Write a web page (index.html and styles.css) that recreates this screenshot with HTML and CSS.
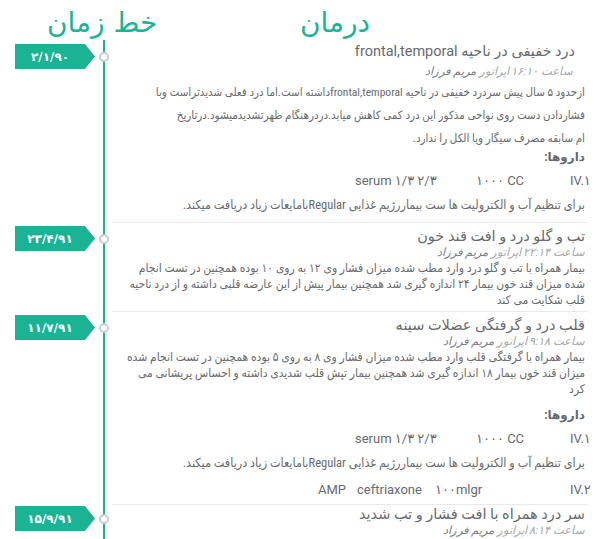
FILE: index.html
```html
<!DOCTYPE html>
<html lang="fa">
<head>
<meta charset="utf-8">
<title>خط زمان درمان</title>
<link rel="stylesheet" href="styles.css">
</head>
<body>
<div class="page">
  <header class="head">
    <div class="head-time">خط زمان</div>
    <div class="head-main">درمان</div>
  </header>

  <div class="timeline">
    <article class="entry entry-first">
      <div class="when"><span class="tag">۲/۱/۹۰</span></div>
      <div class="axis"><span class="dot"></span></div>
      <div class="body" dir="rtl">
        <h2 class="title title-inset">درد خفیفی در ناحیه frontal,temporal</h2>
        <div class="meta meta-inset">ساعت ۱۶:۱۰ اپراتور <span class="who">مریم فرزاد</span></div>
        <p class="desc desc-loose">ازحدود ۵ سال پیش سردرد خفیفی در ناحیه frontal,temporalداشته است.اما درد فعلی شدیدتراست وبا فشاردادن دست روی نواحی مذکور این درد کمی کاهش میابد.دردرهنگام ظهرتشدیدمیشود.درتاریخ<br>ام سابقه مصرف سیگار ویا الکل را ندارد.</p>
        <div class="drugs-h drugs-h-tight">داروها:</div>
        <div class="drug drug-a" dir="ltr"><span class="c3">serum ۱/۳ ۲/۳</span><span class="c2">۱۰۰۰ CC</span><span class="c1">IV.۱</span></div>
        <p class="note">برای تنظیم آب و الکترولیت ها ست بیماررژیم غذایی Regularبامایعات زیاد دریافت میکند.</p>
      </div>
    </article>

    <article class="entry">
      <div class="when"><span class="tag">۲۳/۴/۹۱</span></div>
      <div class="axis"><span class="dot"></span></div>
      <div class="body" dir="rtl">
        <h2 class="title">تب و گلو درد و افت قند خون</h2>
        <div class="meta">ساعت ۲۲:۱۴ اپراتور <span class="who">مریم فرزاد</span></div>
        <p class="desc">بیمار همراه با تب و گلو درد وارد مطب شده میزان فشار وی ۱۲ به روی ۱۰ بوده همچنین در تست انجام شده میزان قند خون بیمار ۲۴ اندازه گیری شد همچنین بیمار پیش از این عارضه قلبی داشته و از درد ناحیه قلب شکایت می کند</p>
      </div>
    </article>

    <article class="entry">
      <div class="when"><span class="tag">۱۱/۷/۹۱</span></div>
      <div class="axis"><span class="dot"></span></div>
      <div class="body" dir="rtl">
        <h2 class="title">قلب درد و گرفتگی عضلات سینه</h2>
        <div class="meta">ساعت ۹:۱۸ اپراتور <span class="who">مریم فرزاد</span></div>
        <p class="desc">بیمار همراه با گرفتگی قلب وارد مطب شده میزان فشار وی ۸ به روی ۵ بوده همچنین در تست انجام شده میزان قند خون بیمار ۱۸ اندازه گیری شد همچنین بیمار تپش قلب شدیدی داشته و احساس پریشانی می کرد</p>
        <div class="drugs-h">داروها:</div>
        <div class="drug drug-a" dir="ltr"><span class="c3">serum ۱/۳ ۲/۳</span><span class="c2">۱۰۰۰ CC</span><span class="c1">IV.۱</span></div>
        <p class="note">برای تنظیم آب و الکترولیت ها ست بیماررژیم غذایی Regularبامایعات زیاد دریافت میکند.</p>
        <div class="drug drug-b" dir="ltr"><span class="c4">AMP</span><span class="c3">ceftriaxone</span><span class="c2">۱۰۰mlgr</span><span class="c1">IV.۲</span></div>
      </div>
    </article>

    <article class="entry entry-last">
      <div class="when"><span class="tag">۱۵/۹/۹۱</span></div>
      <div class="axis"><span class="dot"></span></div>
      <div class="body" dir="rtl">
        <h2 class="title">سر درد همراه با افت فشار و تب شدید</h2>
        <div class="meta">ساعت ۸:۱۴ اپراتور <span class="who">مریم فرزاد</span></div>
      </div>
    </article>
  </div>
</div>
</body>
</html>
```

FILE: styles.css
```css
* { box-sizing: border-box; }

html, body {
  margin: 0;
  padding: 0;
  background: #ffffff;
}

body {
  font-family: Roboto, "DejaVu Sans", sans-serif;
  color: #676a6c;
  width: 600px;
  height: 539px;
  overflow: hidden;
}

.head {
  display: flex;
  align-items: flex-end;
  height: 40px;
  color: #1ab394;
  font-family: "DejaVu Sans", sans-serif;
  font-size: 28px;
  line-height: 34px;
}

.head-time {
  width: 300px;
  padding-left: 47px;
}

.timeline {
  background: linear-gradient(#1ab394, #1ab394) no-repeat 103px 0 / 2px 100%;
  min-height: 499px;
}

.entry {
  display: grid;
  grid-template-columns: 96px 16px 1fr;
  align-items: start;
}

.when {
  padding: 3px 0 0 15px;
}

.tag {
  display: flex;
  align-items: center;
  justify-content: center;
  width: 80px;
  height: 25px;
  padding-right: 10px;
  background: #1ab394;
  color: #ffffff;
  font-size: 12px;
  font-weight: bold;
  clip-path: polygon(0 0, 70px 0, 80px 50%, 70px 100%, 0 100%);
}

.axis {
  display: flex;
  justify-content: center;
  padding-top: 11px;
}

.dot {
  width: 10px;
  height: 10px;
  border: 2px solid #c9cccd;
  border-radius: 50%;
  background: #ffffff;
}

.body {
  margin-right: 12px;
  padding: 6px 3px 3px 12px;
  border-bottom: 1px solid #e7eaec;
  text-align: right;
}

.entry-first .body { padding-top: 2px; padding-bottom: 5px; }
.entry-first .when { padding-top: 4px; }
.entry-first .axis { padding-top: 12px; }

.entry-last .body { border-bottom: 0; padding-top: 2px; }
.entry-last .when { padding-top: 1px; }
.entry-last .axis { padding-top: 9px; }

.title {
  margin: 0;
  font-size: 14.5px;
  font-weight: normal;
  line-height: 16px;
  color: #676a6c;
}

.title-inset { padding-right: 10px; line-height: 20px; }

.meta {
  margin-top: 1px;
  font-size: 11.5px;
  font-style: italic;
  line-height: 12px;
  color: #a5a7a9;
}

.meta-inset { padding-right: 12px; margin-top: 3px; }

.meta .who {
  color: #7b7e80;
}

.desc {
  margin: 2px 0 0;
  font-family: Roboto, "DejaVu Sans Condensed", "DejaVu Sans", sans-serif;
  font-stretch: condensed;
  font-size: 12px;
  line-height: 16px;
}

.desc-loose {
  margin-top: 4px;
  font-size: 11.5px;
  line-height: 23px;
}

.drugs-h {
  margin-top: 8px;
  font-size: 12px;
  font-weight: bold;
  line-height: 20px;
}

.drugs-h-tight { margin-top: -3px; }

.drug {
  display: flex;
  justify-content: flex-end;
  margin-top: 2px;
  font-size: 13px;
  line-height: 24px;
}

.drug span { text-align: left; white-space: nowrap; }
.drug .c1 { width: 15px; }

.drug-a .c3 { width: 121px; }
.drug-a .c2 { width: 94px; }

.drug-b { margin-top: 3px; margin-bottom: -1px; }
.drug-b .c4 { width: 39px; }
.drug-b .c3 { width: 78px; }
.drug-b .c2 { width: 135px; }

.note {
  margin: 0;
  font-family: Roboto, "DejaVu Sans Condensed", "DejaVu Sans", sans-serif;
  font-stretch: condensed;
  font-size: 12.5px;
  line-height: 24px;
}
```
